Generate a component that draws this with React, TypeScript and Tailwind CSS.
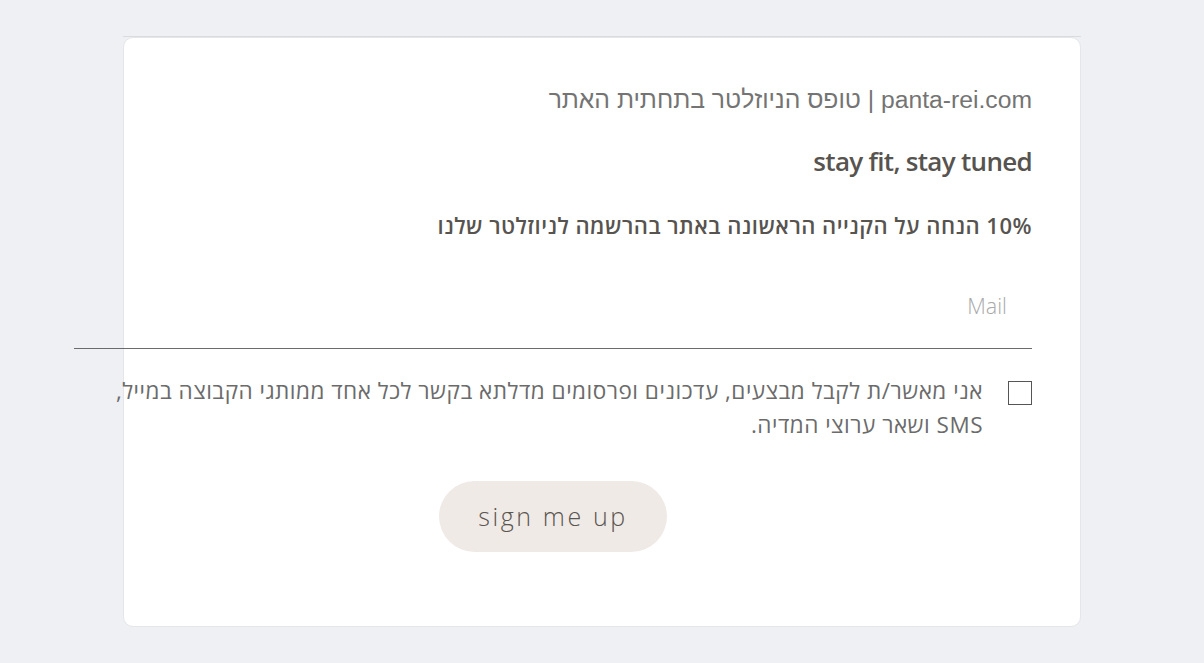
export default function App() {
  return (
    <div className="min-h-screen bg-[#eef0f3] pt-[36px] font-['Open_Sans',sans-serif]">
      <div className="mx-auto w-[958px]">
        {/* top rule above the card */}
        <div className="h-px bg-[#dadbdd]"></div>

        <div
          dir="rtl"
          className="rounded-[10px] border border-[#e4e6e9] bg-white pt-[47px] pb-[74px]"
        >
          <div className="mr-[48px] -ml-[50px]">
            <h1 className="font-['Liberation_Sans',Arial,sans-serif] text-[24.7px] leading-[30px] text-[#747474]">
              panta-rei.com | טופס הניוזלטר בתחתית האתר
            </h1>

            <h2 className="mt-[28px] text-[26px] leading-[36px] font-semibold tracking-[-0.7px] text-[#57534f]">
              stay fit, stay tuned
            </h2>

            <p className="mt-[31px] text-[22px] leading-[30px] font-semibold tracking-[0.5px] text-[#57534f]">
              10% הנחה על הקנייה הראשונה באתר בהרשמה לניוזלטר שלנו
            </p>

            <input
              type="email"
              placeholder="Mail"
              className="mt-[52px] block w-full border-b border-[#6b6b6b] bg-transparent pt-0 pr-[25px] pb-[28px] text-[21.5px] leading-[28px] font-light text-[#555] outline-none placeholder:text-[#a9a9a9]"
            />

            <label className="mt-[25px] flex items-start gap-[25px]">
              <input
                type="checkbox"
                className="mt-[7px] h-[24px] w-[24px] shrink-0 appearance-none border border-[#555] bg-white"
              />
              <span className="text-[22.5px] leading-[34px] tracking-[0.5px] text-[#6b6b6b]">
                אני מאשר/ת לקבל מבצעים, עדכונים ופרסומים מדלתא בקשר לכל אחד ממותגי הקבוצה במייל,
                <br />
                SMS ושאר ערוצי המדיה.
              </span>
            </label>

            <div className="mt-[39px] flex justify-center">
              <button className="flex h-[71px] w-[228px] items-center justify-center rounded-full bg-[#efeae6] text-[25px] font-light tracking-[2.6px] text-[#5a5550]">
                sign me up
              </button>
            </div>
          </div>
        </div>
      </div>
    </div>
  );
}
